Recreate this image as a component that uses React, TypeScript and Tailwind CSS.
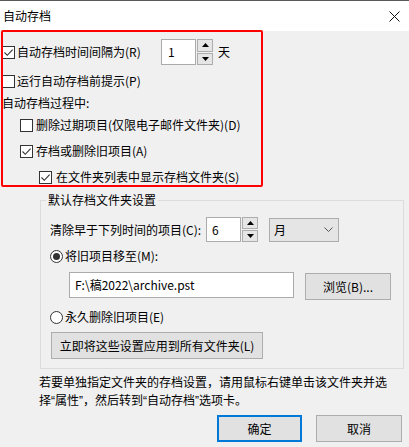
import React from "react";

const Check = ({ checked }: { checked?: boolean }) => (
  <span className="flex h-[13px] w-[13px] shrink-0 items-center justify-center border border-[#333333] bg-white">
    {checked && (
      <svg width="11" height="11" viewBox="0 0 11 11">
        <path d="M1.5 5.5 L4.3 8.3 L9.6 2.6" fill="none" stroke="#333333" strokeWidth="1.1" />
      </svg>
    )}
  </span>
);

const Radio = ({ checked }: { checked?: boolean }) => (
  <span className="flex h-[13px] w-[13px] shrink-0 items-center justify-center rounded-full border border-[#333333] bg-white">
    {checked && <span className="h-[7px] w-[7px] rounded-full bg-[#333333]" />}
  </span>
);

const Spinner = () => (
  <div className="ml-[1px] flex h-full w-[16px] flex-col gap-[1px]">
    <div className="flex flex-1 items-center justify-center border border-[#adadad] bg-[#e5e5e5]">
      <svg width="7" height="4" viewBox="0 0 7 4">
        <path d="M3.5 0 L7 4 L0 4 Z" fill="#000" />
      </svg>
    </div>
    <div className="flex flex-1 items-center justify-center border border-[#adadad] bg-[#e5e5e5]">
      <svg width="7" height="4" viewBox="0 0 7 4">
        <path d="M0 0 L7 0 L3.5 4 Z" fill="#000" />
      </svg>
    </div>
  </div>
);

const Btn = ({ label, className }: { label: string; className: string }) => (
  <div className={`flex items-center justify-center border border-[#adadad] bg-[#e1e1e1] ${className}`}>
    {label}
  </div>
);

// narrow latin quotes, like the original dialog font
const Q = ({ c }: { c: string }) => <span className="font-['Liberation_Sans',sans-serif]">{c}</span>;

export default function App() {
  return (
    <div className="relative h-[447px] w-[409px] overflow-hidden bg-[#f0f0f0] font-['Noto_Sans_CJK_SC',sans-serif] text-[12px] leading-none text-black">
      {/* title bar */}
      <div className="flex h-[31px] items-center justify-between border-t border-[#5a5a5a] bg-white pl-[3px] pr-[9px]">
        <span>自动存档</span>
        <svg width="11" height="11" viewBox="0 0 11 11">
          <path d="M0.5 0.5 L10.5 10.5 M10.5 0.5 L0.5 10.5" stroke="#111" strokeWidth="1" />
        </svg>
      </div>

      {/* top options */}
      <div className="mt-[8px] flex h-[26px] items-center pl-[2px]">
        <Check checked />
        <span className="ml-[2px] w-[144px]">自动存档时间间隔为(R)</span>
        <div className="flex h-full w-[35px] items-center border border-[#ababab] bg-white pl-[6px]">1</div>
        <Spinner />
        <span className="ml-[5px]">天</span>
      </div>
      <div className="mt-[6px] flex h-[20px] items-center gap-[2px] pl-[2px]">
        <Check />
        <span>运行自动存档前提示(P)</span>
      </div>
      <div className="mt-[2px] flex h-[20px] items-center pl-[2px]">自动存档过程中:</div>
      <div className="mt-[2px] flex h-[20px] items-center gap-[3px] pl-[20px]">
        <Check />
        <span>删除过期项目(仅限电子邮件文件夹)(D)</span>
      </div>
      <div className="mt-[6px] flex h-[20px] items-center gap-[3px] pl-[20px]">
        <Check checked />
        <span>存档或删除旧项目(A)</span>
      </div>
      <div className="mt-[6px] flex h-[20px] items-center gap-[4px] pl-[39px]">
        <Check checked />
        <span>在文件夹列表中显示存档文件夹(S)</span>
      </div>

      {/* group box */}
      <div className="relative ml-[40px] mt-[13px] h-[169px] w-[364px] border border-[#dcdcdc] pl-[9px]">
        <span className="absolute left-[5px] top-[-7px] bg-[#f0f0f0] px-[2px]">默认存档文件夹设置</span>
        <div className="mt-[16px] flex h-[25px] items-center">
          <span className="w-[156px]">清除早于下列时间的项目(C):</span>
          <div className="flex h-full w-[35px] items-center border border-[#ababab] bg-white pl-[5px]">6</div>
          <Spinner />
          <div className="ml-[11px] flex h-[24px] w-[70px] items-center justify-between border border-[#adadad] bg-[#e5e5e5] pl-[4px] pr-[5px]">
            <span>月</span>
            <svg width="9" height="5" viewBox="0 0 9 5">
              <path d="M0.5 0.5 L4.5 4.5 L8.5 0.5" fill="none" stroke="#555" strokeWidth="1" />
            </svg>
          </div>
        </div>
        <div className="mt-[4px] flex h-[20px] items-center gap-[2px]">
          <Radio checked />
          <span>将旧项目移至(M):</span>
        </div>
        <div className="mt-[6px] flex h-[28px] items-start">
          <div className="ml-[19px] flex h-[26px] w-[225px] items-center border border-[#ababab] bg-white pl-[5px]">
            F:\稿2022\archive.pst
          </div>
          <Btn label="浏览(B)..." className="ml-[11px] mt-[1px] h-[27px] w-[86px]" />
        </div>
        <div className="mt-[7px] flex h-[20px] items-center gap-[2px]">
          <Radio />
          <span>永久删除旧项目(E)</span>
        </div>
        <Btn label="立即将这些设置应用到所有文件夹(L)" className="ml-[1px] mt-[5px] h-[27px] w-[212px]" />
      </div>

      {/* note */}
      <p className="ml-[39px] mt-[4px] leading-[18px]">
        若要单独指定文件夹的存档设置，请用鼠标右键单击该文件夹并选
        <br />
        择<Q c="“" />属性<Q c="”" />，然后转到<Q c="“" />自动存档<Q c="”" />选项卡。
      </p>

      {/* buttons */}
      <div className="mt-[5px] flex justify-end gap-[14px] pr-[7px]">
        <div className="flex h-[27px] w-[85px] items-center justify-center border-2 border-[#0078d7] bg-[#e1e1e1]">确定</div>
        <Btn label="取消" className="h-[27px] w-[86px]" />
      </div>

      {/* red annotation frame */}
      <div className="pointer-events-none absolute left-[1px] top-[30px] h-[157px] w-[262px] rounded-[2px] border-2 border-[#ff0000]" />
    </div>
  );
}
